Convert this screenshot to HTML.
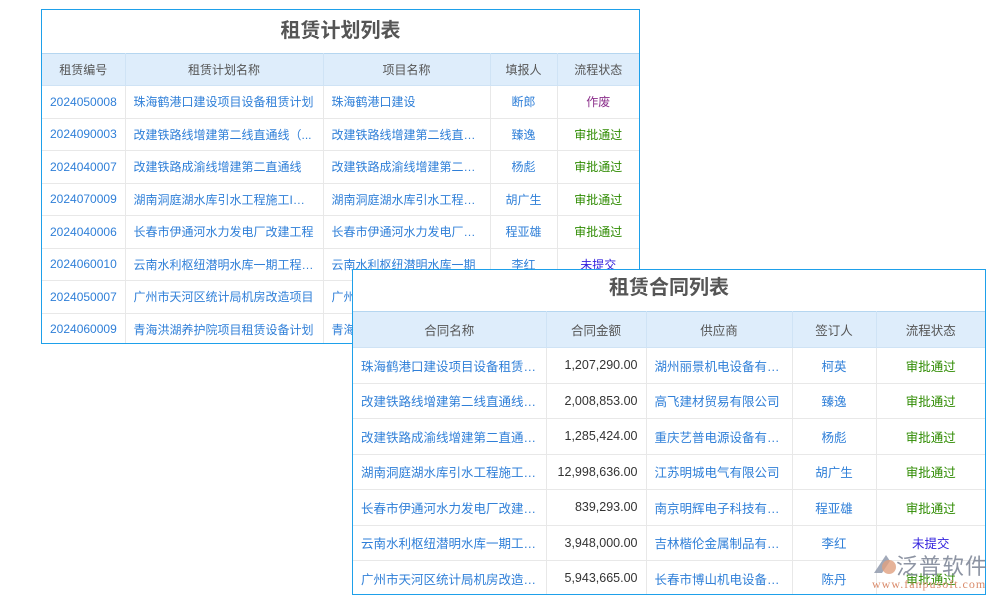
<html><head><style>
body{margin:0;width:1000px;height:600px;background:#fff;position:relative;font-family:"Liberation Sans","Noto Sans CJK SC",sans-serif;overflow:hidden}
.t{position:absolute;background:#fff;border:1px solid #1ea0ea;box-sizing:border-box;overflow:hidden}
.t h1{margin:0;text-align:center;font-size:20px;color:#555;font-weight:bold}
table{border-collapse:collapse;width:100%;table-layout:fixed;font-size:12px}
th{background:#deedfb;color:#555;font-weight:normal;border:1px solid #cfe3f5;border-top:1px solid #b5d6f0;vertical-align:middle}
td{border:1px solid #e8e8e8;color:#2f7fd8;white-space:nowrap;overflow:hidden;text-overflow:ellipsis;padding:0 8px;vertical-align:middle}
tr td:first-child,tr th:first-child{border-left:none}
tr td:last-child,tr th:last-child{border-right:none}
.n{padding:0 4px 0 8px;text-overflow:clip}
.c{text-align:center}.r{text-align:right;color:#333}
.g{color:#2e8b00}.p{color:#8b2f8b}.b{color:#3322dd}
</style></head><body>
<div class="t" style="left:41px;top:9px;width:599px;height:335px">
<h1 style="height:43px;line-height:43px">租赁计划列表</h1>
<table>
<colgroup><col style="width:83px"><col style="width:198px"><col style="width:167px"><col style="width:67px"><col></colgroup>
<tr style="height:32px"><th>租赁编号</th><th>租赁计划名称</th><th>项目名称</th><th>填报人</th><th>流程状态</th></tr>
<tr style="height:32.5px"><td class="n">2024050008</td><td>珠海鹤港口建设项目设备租赁计划</td><td>珠海鹤港口建设</td><td class="c">断郎</td><td class="c p">作废</td></tr>
<tr style="height:32.5px"><td class="n">2024090003</td><td>改建铁路线增建第二线直通线（...</td><td>改建铁路线增建第二线直通线</td><td class="c">臻逸</td><td class="c g">审批通过</td></tr>
<tr style="height:32.5px"><td class="n">2024040007</td><td>改建铁路成渝线增建第二直通线</td><td>改建铁路成渝线增建第二直通线</td><td class="c">杨彪</td><td class="c g">审批通过</td></tr>
<tr style="height:32.5px"><td class="n">2024070009</td><td>湖南洞庭湖水库引水工程施工I标段</td><td>湖南洞庭湖水库引水工程施工</td><td class="c">胡广生</td><td class="c g">审批通过</td></tr>
<tr style="height:32.5px"><td class="n">2024040006</td><td>长春市伊通河水力发电厂改建工程</td><td>长春市伊通河水力发电厂改建</td><td class="c">程亚雄</td><td class="c g">审批通过</td></tr>
<tr style="height:32.5px"><td class="n">2024060010</td><td>云南水利枢纽潜明水库一期工程施工</td><td>云南水利枢纽潜明水库一期</td><td class="c">李红</td><td class="c b">未提交</td></tr>
<tr style="height:32.5px"><td class="n">2024050007</td><td>广州市天河区统计局机房改造项目</td><td>广州市天河区统计局</td><td class="c">陈丹</td><td class="c g">审批通过</td></tr>
<tr style="height:32.5px"><td class="n">2024060009</td><td>青海洪湖养护院项目租赁设备计划</td><td>青海洪湖养护院</td><td class="c">李红</td><td class="c g">审批通过</td></tr>
</table></div>
<div class="t" style="left:352px;top:269px;width:634px;height:326px">
<h1 style="height:41px;line-height:36px">租赁合同列表</h1>
<table style="font-size:12.5px">
<colgroup><col style="width:193px"><col style="width:100px"><col style="width:146px"><col style="width:84px"><col></colgroup>
<tr style="height:36px"><th>合同名称</th><th>合同金额</th><th>供应商</th><th>签订人</th><th>流程状态</th></tr>
<tr style="height:35.5px"><td>珠海鹤港口建设项目设备租赁合同</td><td class="r">1,207,290.00</td><td>湖州丽景机电设备有限公司</td><td class="c">柯英</td><td class="c g">审批通过</td></tr>
<tr style="height:35.5px"><td>改建铁路线增建第二线直通线合同</td><td class="r">2,008,853.00</td><td>高飞建材贸易有限公司</td><td class="c">臻逸</td><td class="c g">审批通过</td></tr>
<tr style="height:35.5px"><td>改建铁路成渝线增建第二直通线合同</td><td class="r">1,285,424.00</td><td>重庆艺普电源设备有限公司</td><td class="c">杨彪</td><td class="c g">审批通过</td></tr>
<tr style="height:35.5px"><td>湖南洞庭湖水库引水工程施工合同</td><td class="r">12,998,636.00</td><td>江苏明城电气有限公司</td><td class="c">胡广生</td><td class="c g">审批通过</td></tr>
<tr style="height:35.5px"><td>长春市伊通河水力发电厂改建合同</td><td class="r">839,293.00</td><td>南京明辉电子科技有限公司</td><td class="c">程亚雄</td><td class="c g">审批通过</td></tr>
<tr style="height:35.5px"><td>云南水利枢纽潜明水库一期工程合同</td><td class="r">3,948,000.00</td><td>吉林楷伦金属制品有限公司</td><td class="c">李红</td><td class="c b">未提交</td></tr>
<tr style="height:35.5px"><td>广州市天河区统计局机房改造合同</td><td class="r">5,943,665.00</td><td>长春市博山机电设备有限公司</td><td class="c">陈丹</td><td class="c g">审批通过</td></tr>
</table></div>
<div style="position:absolute;left:872px;top:553px;width:28px;height:26px">
<svg width="28" height="26"><path d="M14 2 L2 20 L10 20 L18 8Z" fill="#8a93a8" opacity=".8"/><circle cx="17" cy="14" r="7" fill="#e0a080" opacity=".8"/></svg></div>
<div style="position:absolute;left:896px;top:549px;font-size:22px;color:#7a8294;opacity:.85;letter-spacing:1px">泛普软件</div>
<div style="position:absolute;left:872px;top:577px;font-size:12px;color:#d98a6a;font-family:'Liberation Serif',serif;letter-spacing:1px">www.fanpusoft.com</div>
</body></html>
